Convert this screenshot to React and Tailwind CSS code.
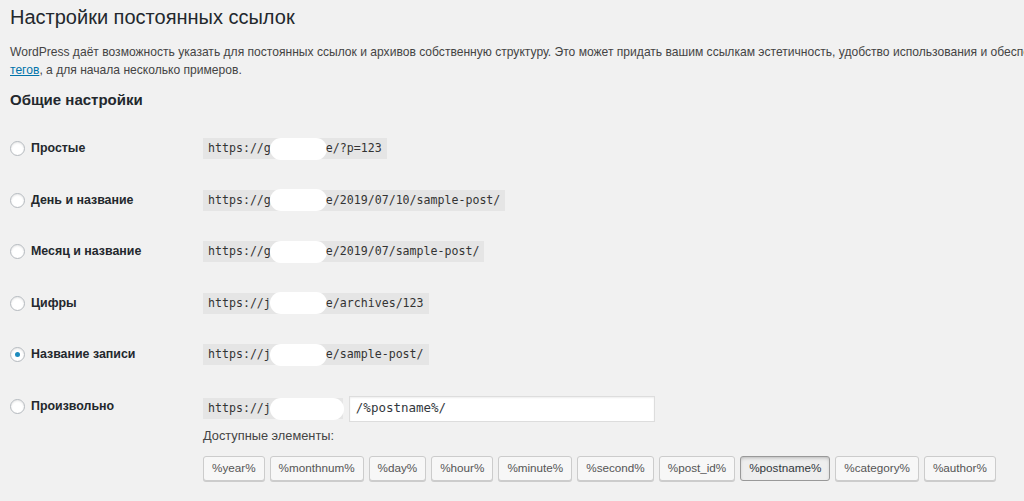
import React from 'react'

const mono = { fontFamily: '"DejaVu Sans Mono", "Liberation Mono", monospace' }

const rows = [
    { label: 'Простые', head: 'https://g', tail: 'e/?p=123' },
    { label: 'День и название', head: 'https://g', tail: 'e/2019/07/10/sample-post/' },
    { label: 'Месяц и название', head: 'https://g', tail: 'e/2019/07/sample-post/' },
    { label: 'Цифры', head: 'https://j', tail: 'e/archives/123' },
    { label: 'Название записи', head: 'https://j', tail: 'e/sample-post/', checked: true },
]

const tags = [
    '%year%',
    '%monthnum%',
    '%day%',
    '%hour%',
    '%minute%',
    '%second%',
    '%post_id%',
    '%postname%',
    '%category%',
    '%author%',
]

const Radio = ({ checked }) => (
    <span className="w-[15px] h-[15px] rounded-full bg-white border border-[#b4b9be] shadow-[inset_0_1px_2px_rgba(0,0,0,0.1)] flex items-center justify-center shrink-0">
        {checked && <span className="w-[5px] h-[5px] rounded-full bg-[#1e8cbe]" />}
    </span>
)

const Redacted = ({ width = 'w-[66px]' }) => (
    <span className={`relative inline-block h-[14px] align-middle ${width}`}>
        <span className="absolute -left-[1px] -right-[1px] -top-[4px] -bottom-[4px] rounded-full bg-white" />
    </span>
)

const Code = ({ head, tail }) => (
    <code
        className="inline-flex items-center h-[21px] px-[5px] bg-[#e5e5e5] text-[11.6px] text-[#333] whitespace-pre"
        style={mono}
    >
        <span>{head}</span>
        <Redacted width="w-[55px]" />
        <span className="relative">{tail}</span>
    </code>
)

export default function App() {
    return (
        <div
            className="min-h-[501px] bg-[#f1f1f1] text-[#444] overflow-hidden"
            style={{ fontFamily: '"Liberation Sans", Arial, sans-serif' }}
        >
            <div className="pl-[10px] pt-[4px]">
                <h1 className="text-[20px] leading-[26px] text-[#23282d] font-normal">
                    Настройки постоянных ссылок
                </h1>
                <p className="mt-[13px] text-[12.08px] leading-[18px] whitespace-nowrap">
                    WordPress даёт возможность указать для постоянных ссылок и архивов собственную структуру. Это может придать вашим ссылкам эстетичность, удобство использования и обеспечить совместимость.
                    <br />
                    <a className="text-[#0073aa] underline">тегов</a>, а для начала несколько примеров.
                </p>
                <h2 className="mt-[11px] text-[15px] leading-[20px] font-semibold text-[#23282d]">
                    Общие настройки
                </h2>

                <div className="mt-[13px]">
                    {rows.map((r) => (
                        <div key={r.label} className="flex items-center h-[51.5px]">
                            <div className="w-[193px] shrink-0 flex items-center gap-[6px]">
                                <Radio checked={r.checked} />
                                <span className="text-[12.4px] font-bold text-[#23282d]">{r.label}</span>
                            </div>
                            <Code head={r.head} tail={r.tail} />
                        </div>
                    ))}

                    <div className="flex pt-[15px]">
                        <div className="w-[193px] shrink-0 flex items-center gap-[6px] h-[22px]">
                            <Radio />
                            <span className="text-[12.4px] font-bold text-[#23282d]">Произвольно</span>
                        </div>
                        <div>
                            <div className="flex items-center gap-[6px]">
                                <code
                                    className="inline-flex items-center h-[21px] pl-[5px] bg-[#e5e5e5] text-[11.6px] text-[#333] whitespace-pre"
                                    style={mono}
                                >
                                    <span>https://j</span>
                                    <Redacted width="w-[72px]" />
                                </code>
                                <div
                                    className="w-[306px] h-[26px] bg-white border border-[#ddd] shadow-[inset_0_1px_2px_rgba(0,0,0,0.07)] flex items-center px-[6px] text-[12.5px] text-[#32373c]"
                                    style={mono}
                                >
                                    /%postname%/
                                </div>
                            </div>
                            <div className="mt-[5px] text-[12.8px] leading-[18px] text-[#444]">
                                Доступные элементы:
                            </div>
                            <div className="mt-[11px] flex gap-[5px]">
                                {tags.map((t) => (
                                    <span
                                        key={t}
                                        className={
                                            t === '%postname%'
                                                ? 'h-[25px] px-[8px] flex items-center rounded-[3px] border border-[#999] bg-[#eee] shadow-[inset_0_2px_5px_-3px_rgba(0,0,0,0.5)] text-[11.7px] text-[#32373c]'
                                                : 'h-[25px] px-[8px] flex items-center rounded-[3px] border border-[#ccc] bg-[#f7f7f7] shadow-[0_1px_0_#ccc] text-[11.7px] text-[#555]'
                                        }
                                    >
                                        {t}
                                    </span>
                                ))}
                            </div>
                        </div>
                    </div>
                </div>
            </div>
        </div>
    )
}
